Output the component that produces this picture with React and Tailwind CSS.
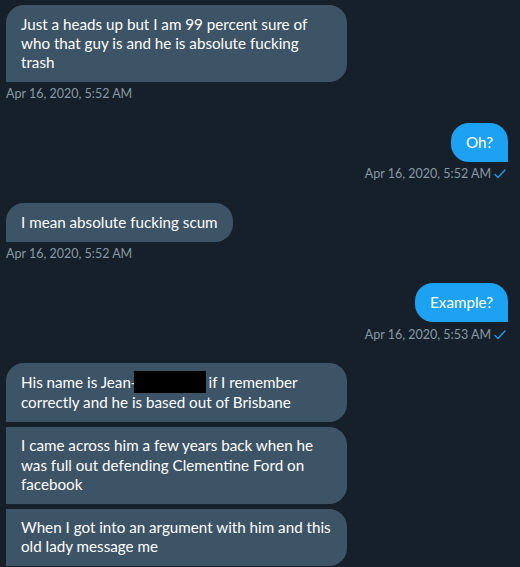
import React from "react";

const font = { fontFamily: "Lato, 'Open Sans', sans-serif" };

function Check() {
  return (
    <svg width="12" height="10" viewBox="0 0 12 10" className="ml-[3px] inline-block" fill="none">
      <path d="M1 5.5 L4 8.5 L11 1" stroke="#1da1f2" strokeWidth="1.3" strokeLinecap="round" strokeLinejoin="round" />
    </svg>
  );
}

function Stamp({ text, right }) {
  return (
    <div className={`mt-[4.5px] h-[16px] flex items-center text-[12.5px] leading-[16px] text-[#8899a6] ${right ? "justify-end pr-[2px]" : ""}`}>
      <span>{text}</span>
      {right && <Check />}
    </div>
  );
}

const leftBubble = "bg-[#3d5466] text-white text-[15.2px] leading-[19.25px] px-[15px] py-[9.5px] whitespace-nowrap";
const rightBubble = "bg-[#1da1f2] text-white text-[15.2px] leading-[19.25px] px-[15px] py-[9.75px] whitespace-nowrap rounded-t-[18px] rounded-bl-[18px]";

export default function App() {
  return (
    <div className="w-[520px] h-[567px] overflow-hidden bg-[#16202a] pt-[5px] pl-[6px] pr-[12px]" style={font}>
      <div className="flex flex-col items-start mb-[20.5px]">
        <div className={`${leftBubble} w-[341px] rounded-t-[18px] rounded-br-[18px]`}>
          Just a heads up but I am 99 percent sure of<br />
          who that guy is and he is absolute fucking<br />
          trash
        </div>
        <Stamp text="Apr 16, 2020, 5:52 AM" />
      </div>

      <div className="flex flex-col items-end mb-[21px]">
        <div className={rightBubble}>Oh?</div>
        <Stamp text="Apr 16, 2020, 5:52 AM" right />
      </div>

      <div className="flex flex-col items-start mb-[21px]">
        <div className={`${leftBubble} py-[9.75px] rounded-t-[18px] rounded-br-[18px]`}>I mean absolute fucking scum</div>
        <Stamp text="Apr 16, 2020, 5:52 AM" />
      </div>

      <div className="flex flex-col items-end mb-[20.5px]">
        <div className={rightBubble}>Example?</div>
        <Stamp text="Apr 16, 2020, 5:53 AM" right />
      </div>

      <div className="flex flex-col items-start gap-[5px]">
        <div className={`${leftBubble} w-[341px] rounded-t-[18px] rounded-br-[18px]`}>
          His name is Jean-<span className="inline-block align-middle bg-black w-[72px] h-[22px] ml-[-3px] mr-[3px] mt-[-3px]"></span>if I remember<br />
          correctly and he is based out of Brisbane
        </div>
        <div className={`${leftBubble} w-[341px] rounded-r-[18px]`}>
          I came across him a few years back when he<br />
          was full out defending Clementine Ford on<br />
          facebook
        </div>
        <div className={`${leftBubble} w-[341px] rounded-r-[18px]`}>
          When I got into an argument with him and this<br />
          old lady message me
        </div>
      </div>
    </div>
  );
}
